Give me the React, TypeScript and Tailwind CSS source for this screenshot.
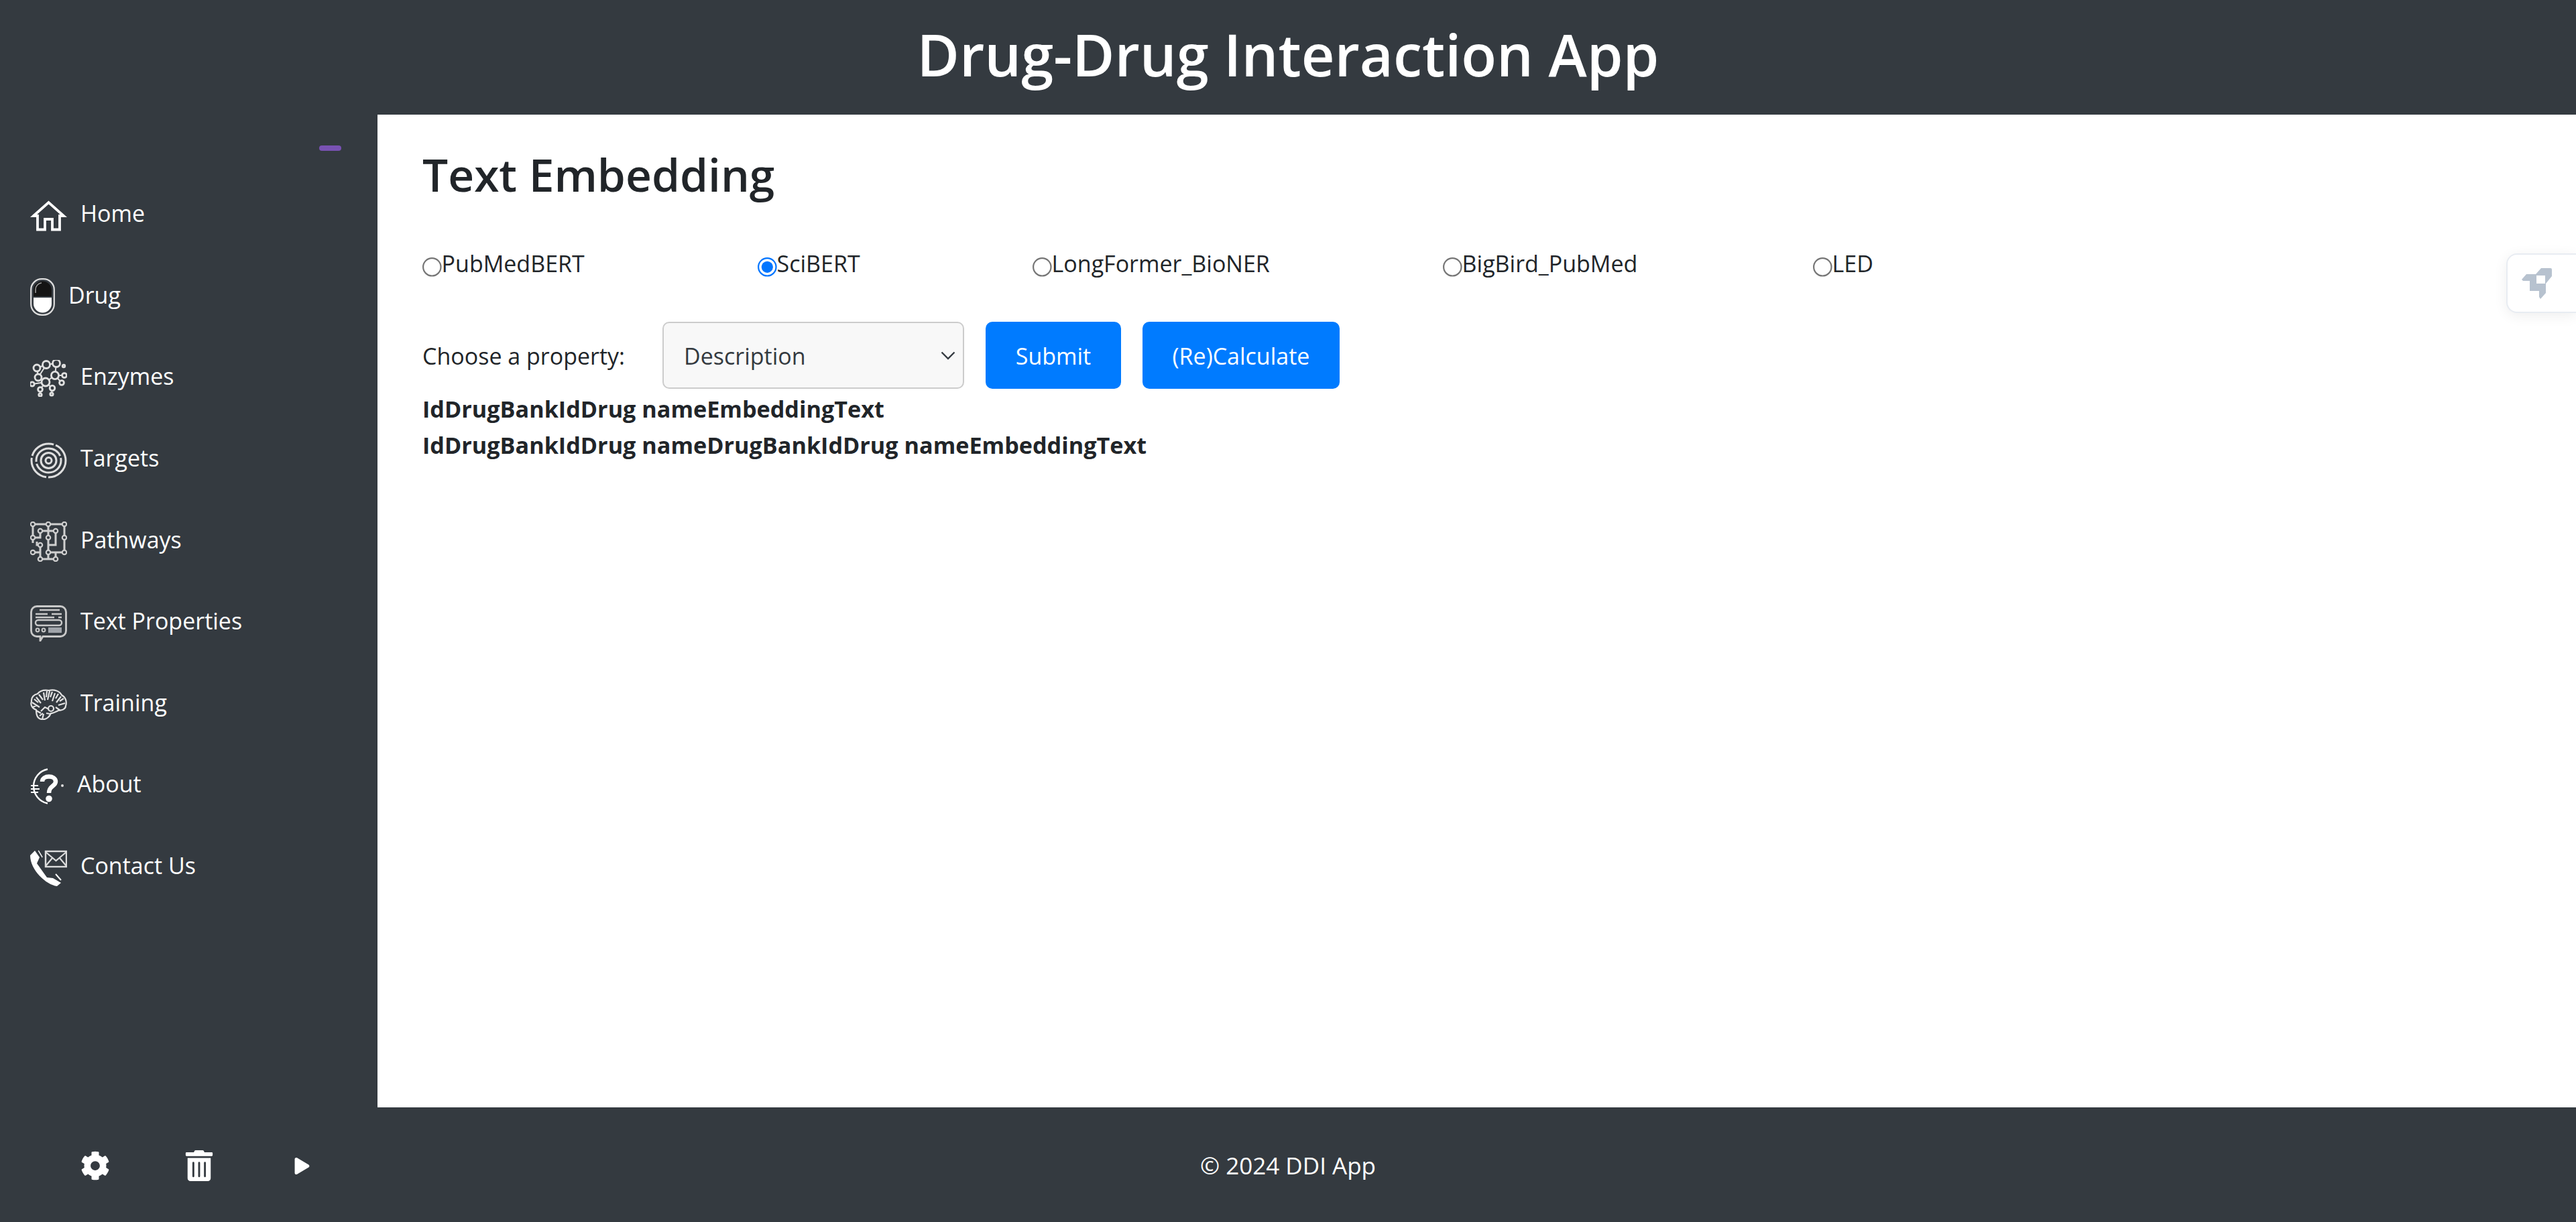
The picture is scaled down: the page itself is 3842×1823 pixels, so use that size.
import React from "react";
import { FaCog, FaTrashAlt, FaPlay } from "react-icons/fa";

const bg = "#343a40";

function HomeIcon() {
  return (
    <svg width="55" height="46" viewBox="0 0 55 46" fill="none" stroke="#ffffff" strokeWidth="3.8">
      <path d="M5 23 L27.5 3 L50 23 L44 23 L44 43.5 L33 43.5 L33 28 L22 28 L22 43.5 L11 43.5 L11 23 Z" strokeLinejoin="miter" />
    </svg>
  );
}
function PillIcon() {
  return (
    <svg width="37" height="56" viewBox="0 0 37 56">
      <rect x="1.2" y="1.2" width="34.6" height="53.6" rx="16" fill="none" stroke="#dddddd" strokeWidth="2.2" />
      <path d="M5 27 V18 a13.5 13.5 0 0 1 27 0 V27 Z" fill="#141414" />
      <path d="M5 29 H32 V38 a13.5 13.5 0 0 1 -27 0 Z" fill="#ffffff" />
      <path d="M8 22 V17 a10 10 0 0 1 9 -10" stroke="#9a9a9a" strokeWidth="1.6" fill="none" />
    </svg>
  );
}
function EnzymeIcon() {
  const c: [number, number, number][] = [[10,12,5],[24,7,5.5],[39,5,5.5],[50,9,1.8],[12,26,5],[37,23,5.6],[51,23,3.4],[23,33,6],[3,36,3.2],[47,34,3.4],[15,44,3.4],[33,42,3.8],[15,52,2.2],[32,51,2.2]];
  return (
    <svg width="55" height="55" viewBox="0 0 55 55" fill="none" stroke="#e0e0e0" strokeWidth="2.8">
      <path d="M10 12 L24 7 L39 5 L37 23 L23 33 L12 26 L10 12 M24 7 L12 26 M37 23 L51 23 M37 23 L47 34 M23 33 L3 36 M23 33 L15 44 M23 33 L33 42 M15 44 L15 52 M33 42 L32 51" strokeWidth="2" />
      {c.map(([x, y, r], i) => (
        <circle key={i} cx={x} cy={y} r={r} fill={bg} />
      ))}
    </svg>
  );
}
function TargetIcon() {
  return (
    <svg width="55" height="54" viewBox="0 0 55 54" fill="none" stroke="#dedede" strokeWidth="3">
      <ellipse cx="27.5" cy="27" rx="25.5" ry="25" strokeDasharray="40 3" />
      <ellipse cx="27.5" cy="27" rx="18.5" ry="18" strokeDasharray="52 3" />
      <ellipse cx="27.5" cy="27" rx="11.5" ry="11.5" />
      <ellipse cx="27.5" cy="27" rx="4.5" ry="4.5" />
    </svg>
  );
}
function PathwayIcon() {
  const p: [number, number][] = [[4,4],[27,4],[51,4],[15,14],[38,14],[4,24],[27,24],[51,24],[15,35],[4,46],[27,46],[51,46],[15,56],[38,56]];
  return (
    <svg width="55" height="60" viewBox="0 0 55 60" fill="none" stroke="#cfcfcf" strokeWidth="3">
      <path d="M4 4 H51 M27 4 V56 M4 4 V24 M51 4 V46 M15 14 H38 V35 H27 M15 14 V24 H4 M4 46 H15 V35 H10 V30 M27 46 H51 M15 56 H38 M38 46 V56 M15 46 V56 M4 24 V32" />
      {p.map(([x, y], i) => (
        <circle key={i} cx={x} cy={y} r="3.2" fill={bg} strokeWidth="2.2" />
      ))}
    </svg>
  );
}
function TextIcon() {
  return (
    <svg width="55" height="54" viewBox="0 0 55 54" fill="none" stroke="#c9c9c9" strokeWidth="2.8">
      <path d="M10 1.5 H45 a8.5 8.5 0 0 1 8.5 8.5 V38 a8.5 8.5 0 0 1 -8.5 8.5 H19 L15 53 V46.5 H10 a8.5 8.5 0 0 1 -8.5 -8.5 V10 a8.5 8.5 0 0 1 8.5 -8.5 Z" />
      <path d="M14 7 H44 M8 13 H26 M32 13 H47 M8 18 H36 M42 18 H47" strokeWidth="2.4" />
      <rect x="8" y="22" width="39" height="8" rx="4" strokeWidth="2.4" />
      <circle cx="11" cy="37" r="2.4" strokeWidth="2" />
      <circle cx="20" cy="37" r="2.4" strokeWidth="2" />
      <rect x="27" y="33" width="20" height="8" fill="#a0a4aa" stroke="none" />
    </svg>
  );
}
function BrainIcon() {
  return (
    <svg width="55" height="46" viewBox="0 0 55 46" fill="none" stroke="#e2e2e2" strokeWidth="2.2">
      <path d="M9 31 C3 29 0 23 2 19 C1 12 6 8 11 7 C15 2 22 1 28 2 C36 0 44 3 47 9 C53 12 55 19 53 25 C53 30 47 32 42 32 C38 34 35 36 31 36 C29 41 24 46 18 45 C11 45 9 39 9 31 Z" />
      <path d="M9 12 L16 21 M13 8 L19 16 M20 5 L22 17 M25 3 L24 12 M29 3 L26 16 M33 4 L30 12 M37 6 L33 18 M42 7 L38 14 M46 11 L39 20 M3 20 L14 27 M6 15 L12 20 M4 27 L10 24 M52 21 L42 24 M50 14 L44 18 M16 33 L22 27 L28 30 M18 45 L20 37 M9 32 L16 36 M38 27 L45 32 M24 36 L30 37 M14 40 L19 36" />
      <circle cx="31" cy="29" r="4" />
    </svg>
  );
}
function AboutIcon() {
  return (
    <svg width="50" height="54" viewBox="0 0 50 54" fill="none" stroke="#ffffff">
      <path d="M26 1.5 A26 26 0 0 0 26 52.5" strokeWidth="2.4" />
      <path d="M1 26 H12 M1 31 H14 M1 36 H12" strokeWidth="2" />
      <path d="M18 20 C18 10 38 10 38 20 C38 27 28 26 28 37" strokeWidth="6.5" />
      <circle cx="28" cy="45.5" r="4.8" fill="#ffffff" stroke="none" />
      <circle cx="48" cy="26" r="2" fill="#dddddd" stroke="none" />
    </svg>
  );
}
function ContactIcon() {
  return (
    <svg width="55" height="54" viewBox="0 0 55 54">
      <path d="M7 1 L14 11 L10 20 L25 41 L34 42 L46 49 L40 54 C24 52 0 30 0 8 Z" fill="#ffffff" />
      <path d="M12 1 L18 11 M38 36 L46 45" stroke="#ffffff" strokeWidth="2" />
      <path d="M10 0 L17 12 M36 37 L44 47" stroke={bg} strokeWidth="1.6" />
      <rect x="23" y="2" width="31" height="23" fill="none" stroke="#dcdcdc" strokeWidth="2.4" />
      <path d="M23 3 L38.5 16 L54 3 M23 24 L33 12 M54 24 L44 12" fill="none" stroke="#dcdcdc" strokeWidth="2.2" />
    </svg>
  );
}
function RocketIcon() {
  return (
    <svg width="45" height="46" viewBox="0 0 45 46">
      <path
        fillRule="evenodd"
        fill="#b7c2cf"
        d="M29 0 L21 9 L7 9 L0 17 L2 19 L12 19 L12 34 L26 34 L26 43 L28 46 L36 37 L36 23 L45 12 L45 2 Q45 0 43 0 Z M22 11 L35 11 L35 23 L22 23 Z"
      />
    </svg>
  );
}

const navItems: { label: string; icon: React.ReactNode }[] = [
  { label: "Home", icon: <HomeIcon /> },
  { label: "Drug", icon: <PillIcon /> },
  { label: "Enzymes", icon: <EnzymeIcon /> },
  { label: "Targets", icon: <TargetIcon /> },
  { label: "Pathways", icon: <PathwayIcon /> },
  { label: "Text Properties", icon: <TextIcon /> },
  { label: "Training", icon: <BrainIcon /> },
  { label: "About", icon: <AboutIcon /> },
  { label: "Contact Us", icon: <ContactIcon /> },
];

const radios: { label: string; w: string; checked?: boolean }[] = [
  { label: "PubMedBERT", w: "w-[500px]" },
  { label: "SciBERT", w: "w-[410px]", checked: true },
  { label: "LongFormer_BioNER", w: "w-[612px]" },
  { label: "BigBird_PubMed", w: "w-[552px]" },
  { label: "LED", w: "w-[120px]" },
];

export default function App() {
  return (
    <div className="flex h-[1823px] w-[3842px] flex-col overflow-hidden bg-[#343a40] font-['Open_Sans','Noto_Sans',sans-serif] text-[34px] text-white">
      <header className="flex h-[171px] shrink-0 items-center justify-center pb-[8px]">
        <h1 className="text-[86.5px] font-semibold leading-none">Drug-Drug Interaction App</h1>
      </header>
      <div className="flex min-h-0 flex-1">
        <aside className="flex w-[563px] shrink-0 flex-col">
          <div className="flex h-[62px] justify-end pr-[54px] pt-[46px]">
            <div className="h-[8px] w-[33px] rounded-full bg-[#7952b3]" />
          </div>
          <nav className="flex flex-col pl-[45px] pt-[28px]">
            {navItems.map((item) => (
              <a key={item.label} className="flex h-[121.6px] items-center gap-[20px]">
                <span className="flex shrink-0 items-center">{item.icon}</span>
                <span className="-mt-[6px]">{item.label}</span>
              </a>
            ))}
          </nav>
        </aside>
        <main className="relative flex-1 bg-white pl-[67px] pt-[46px] text-[#212529]">
          <h2 className="text-[67.6px] font-semibold leading-[86px]">Text Embedding</h2>
          <div className="mt-[65px] flex h-[50px] items-center">
            {radios.map((r) => (
              <label key={r.label} className={`flex items-center ${r.w}`}>
                <input type="radio" name="model" defaultChecked={r.checked} className="mt-[5px] shrink-0 [zoom:2.2]" />
                <span>{r.label}</span>
              </label>
            ))}
          </div>
          <div className="mt-[62px] flex h-[100px] items-center">
            <label htmlFor="property" className="w-[358px] pt-[3px]">Choose a property:</label>
            <div className="relative h-[100px] w-[450px]">
              <select
                id="property"
                defaultValue="Description"
                className="h-full w-full appearance-none rounded-[10px] border-2 border-[#cccccc] bg-[#f8f8f8] pl-[30px] pt-[3px] text-[#343a40]"
              >
                <option>Description</option>
              </select>
              <svg className="pointer-events-none absolute right-[13px] top-[44px]" width="22" height="13" viewBox="0 0 22 13" fill="none" stroke="#343a40" strokeWidth="2.4">
                <path d="M1.5 1.5 L11 11 L20.5 1.5" />
              </svg>
            </div>
            <button className="ml-[32px] flex h-[100px] w-[202px] items-center justify-center rounded-[10px] bg-[#007bff] pt-[3px] text-white">Submit</button>
            <button className="ml-[32px] flex h-[100px] w-[294px] items-center justify-center rounded-[10px] bg-[#007bff] pt-[3px] text-white">(Re)Calculate</button>
          </div>
          <div className="mt-[3px] text-[34.2px] font-bold leading-[54px]">IdDrugBankIdDrug nameEmbeddingText</div>
          <div className="text-[34.2px] font-bold leading-[54px]">IdDrugBankIdDrug nameDrugBankIdDrug nameEmbeddingText</div>
          <div className="absolute right-0 top-[207px] flex h-[89px] w-[104px] items-center rounded-l-[16px] border-2 border-r-0 border-[#e8ecf2] bg-white pl-[21px] shadow-[0_4px_20px_rgba(0,0,0,0.07)]">
            <RocketIcon />
          </div>
        </main>
      </div>
      <footer className="relative flex h-[171px] shrink-0 items-center">
        <div className="flex w-[563px] items-center pl-[120px] pt-[3px]">
          <FaCog className="text-[44px]" />
          <FaTrashAlt className="ml-[110px] text-[46px]" />
          <FaPlay className="ml-[118px] text-[25px]" />
        </div>
        <div className="absolute inset-x-0 pt-[3px] text-center text-[35px]">© 2024 DDI App</div>
      </footer>
    </div>
  );
}
